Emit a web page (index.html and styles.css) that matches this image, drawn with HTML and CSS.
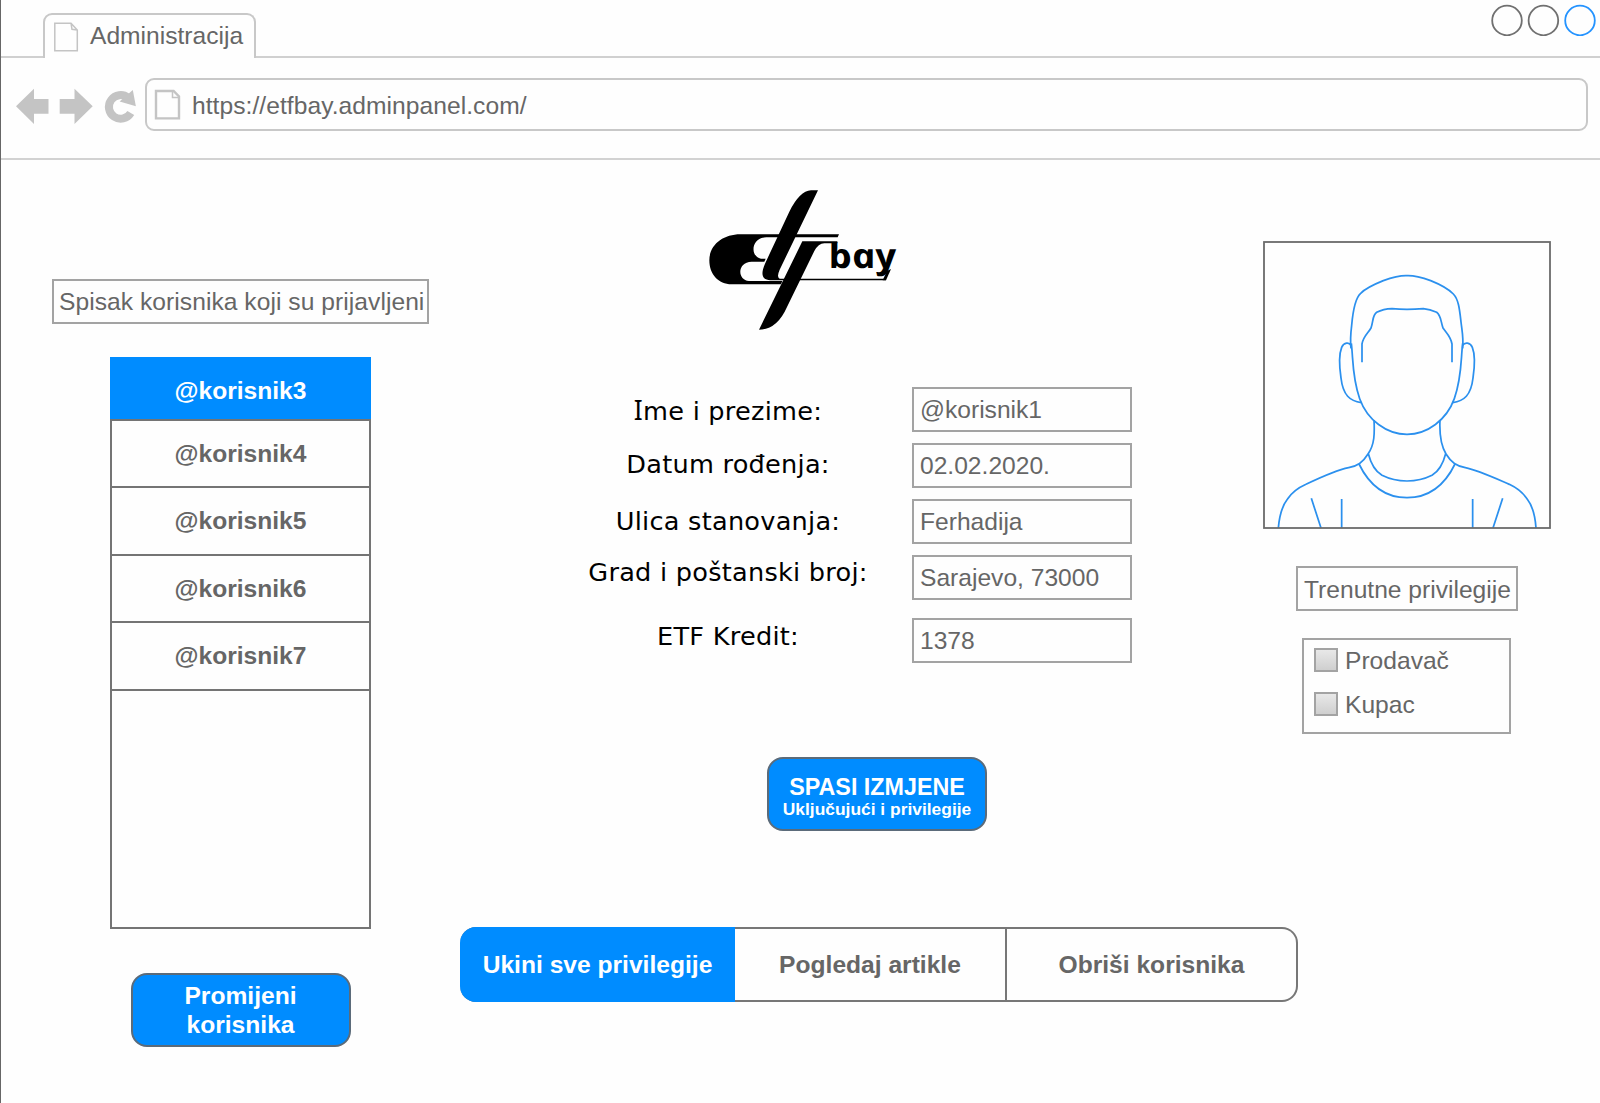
FILE: index.html
```html
<!DOCTYPE html>
<html lang="bs">
<head>
<meta charset="utf-8">
<title>Administracija</title>
<link rel="stylesheet" href="styles.css">
</head>
<body>
<div class="window">
  <header class="chrome">
    <div class="tabs">
      <div class="tab">
        <svg class="tab-icon" width="26" height="30" viewBox="0 0 26 30" fill="none" stroke="#c4c4c4" stroke-width="1.5"><path d="M1.8 1.2H18L24.3 8V28.8H1.8ZM18 1.2L19 7.3L24.3 8"/></svg>
        <span>Administracija</span>
      </div>
      <div class="tab-line"></div>
      <svg class="controls" width="106" height="32" viewBox="0 0 106 32" fill="none" stroke-width="1.8"><circle cx="16" cy="16.5" r="14.8" stroke="#707070"/><circle cx="52.4" cy="16.5" r="14.8" stroke="#707070"/><circle cx="89" cy="16.5" r="14.8" stroke="#2493ff"/></svg>
    </div>
    <div class="toolbar">
      <svg class="nav" width="122" height="38" viewBox="15 88 122 38" fill="#c4c4c4"><path d="M16 106.2L34 88.7V99H48.5V113.7H34V124Z"/><path d="M92.7 106.2L74.5 88.7V99H59.7V113.7H74.5V124Z"/><path d="M130.8 113A11.8 11.8 0 1 1 128 97.6" fill="none" stroke="#c4c4c4" stroke-width="8"/><path d="M132.8 90L135.9 106.2L119.6 101.6Z"/></svg>
      <div class="address">
        <svg width="28" height="32" viewBox="0 0 28 32" fill="none" stroke="#c4c4c4" stroke-width="2.4"><path d="M2 2H19.6L25 7.5V29.4H2Z"/><path d="M18.5 3V8.5H24.5" stroke-width="1.5"/></svg>
        <span>https://etfbay.adminpanel.com/</span>
      </div>
    </div>
  </header>
  <main class="page">
    <aside class="users">
      <div class="box heading">Spisak korisnika koji su prijavljeni</div>
      <ul class="user-list">
        <li class="selected">@korisnik3</li>
        <li>@korisnik4</li>
        <li>@korisnik5</li>
        <li>@korisnik6</li>
        <li>@korisnik7</li>
      </ul>
      <button class="button change">Promijeni<br>korisnika</button>
    </aside>
    <div class="content">
      <div class="detail">
        <section class="profile">
          <svg class="logo" width="220" height="142" viewBox="56 43 660 426">
            <path d="M446 176H150C98 176 57 208 57 254C57 296 84 326 124 326H272L276 316H176C140 314 140 258 184 258H222L226 249H212C178 242 182 186 228 185H442Z"/>
            <path d="M383 44L268 282Q258 305 268 309H584L587 314H240C212 312 212 292 224 264L297 108Q328 46 362 44Z"/>
            <path d="M206 462L336 197H441V203H402Q384 204 372 226L290 394Q260 462 206 462Z"/>
            <path d="M577 314L590 286L602 280L587 314Z"/>
            <text class="logo-text" transform="translate(421 277) scale(1.16 1) skewX(12)">bay</text>
          </svg>
          <form class="fields">
            <div class="field"><label class="l1"><span class="serif-i">I</span>me i prezime:</label><div class="box value">@korisnik1</div></div>
            <div class="field"><label class="l2">Datum rođenja:</label><div class="box value">02.02.2020.</div></div>
            <div class="field"><label class="l3">Ulica stanovanja:</label><div class="box value">Ferhadija</div></div>
            <div class="field"><label class="l4">Grad i poštanski broj:</label><div class="box value">Sarajevo, 73000</div></div>
            <div class="field last"><label class="l5">ETF Kredit:</label><div class="box value">1378</div></div>
          </form>
          <button class="button save"><span class="save-title">SPASI IZMJENE</span><span class="save-note">Uključujući i privilegije</span></button>
        </section>
        <aside class="account">
          <svg class="avatar" width="288" height="288" viewBox="39 33 864 864" fill="none" stroke="#2b90ee" stroke-width="5.2">
            <path d="M303 355C300 330 302 310 305 286C309 240 316 204 332 190C346 176 370 164 400 152Q444 136 471 137Q498 136 542 152C572 164 596 178 610 192C626 208 629 240 633 276C637 310 641 325 638 355"/>
            <path d="M336 397V342C340 318 354 310 363 294C370 274 367 256 380 247Q400 237 426 236Q448 238 471 238Q494 238 520 236Q540 238 560 247C573 256 572 274 579 294C588 308 602 318 606 342V397"/>
            <path d="M304 340C310 390 306 440 329 506C352 570 410 613 471 613C532 613 590 570 613 506C636 440 632 390 638 340"/>
            <path d="M303 346C298 336 282 336 275 352C267 372 268 410 273 444C279 496 300 513 334 518M638 346C644 336 660 336 667 352C675 372 674 410 669 444C663 496 642 513 608 518"/>
            <path d="M372 570C374 610 374 644 354 672C338 698 322 708 296 713C260 720 212 742 168 763Q130 780 112 808Q90 836 85 894M570 570C568 610 571 644 588 672C604 698 620 708 646 713C682 720 734 744 778 763Q814 780 832 808Q854 836 858 894"/>
            <path d="M355 671Q367 718 396 736Q430 753 471 753Q512 753 546 736Q575 718 587 671M327 702C360 770 410 803 471 803C532 803 582 770 615 702M184 805L213 894M275 807V894M668 807V894M758 805L729 894"/>
            <rect x="42" y="36" width="858" height="858" stroke="#6b6b6b" stroke-width="5.4"/>
          </svg>
          <div class="box rights-title">Trenutne privilegije</div>
          <div class="rights">
            <div class="right"><span class="check"></span>Prodavač</div>
            <div class="right"><span class="check"></span>Kupac</div>
          </div>
        </aside>
      </div>
      <nav class="actions">
        <button class="active">Ukini sve privilegije</button>
        <button class="articles">Pogledaj artikle</button>
        <button class="remove">Obriši korisnika</button>
      </nav>
    </div>
  </main>
</div>
</body>
</html>
```
FILE: styles.css
```css
* { box-sizing: border-box; }
body {
  margin: 0;
  background: #fefefe;
  color: #666;
  font-family: "Liberation Sans", Arial, sans-serif;
  font-size: 24.6px;
  line-height: 29px;
}
button { margin: 0; padding: 0; font: inherit; font-weight: bold; }
svg { display: block; flex: none; }
.window { width: 1600px; height: 1103px; overflow: hidden; border-left: 1px solid #666; }

.chrome { height: 160px; border-bottom: 2px solid #d2d2d2; }
.tabs { display: flex; height: 58px; position: relative; }
.tabs::before { content: ""; width: 42px; border-bottom: 2px solid #d0d0d0; }
.tab {
  display: flex;
  width: 213px;
  margin-top: 13px;
  padding: 6px 0 0 8px;
  gap: 12px;
  border: 2px solid #c8c8c8;
  border-bottom: 0;
  border-radius: 9px 9px 0 0;
}
.tab-line { flex: 1; border-bottom: 2px solid #d0d0d0; }
.tab-icon { margin-top: 1px; }
.tab span { margin-left: -1px; }
.controls { position: absolute; right: 3px; top: 4px; }
.toolbar { display: flex; padding: 20px 12px 0 14px; }
.nav { margin-top: 10px; }
.address {
  display: flex;
  flex: 1;
  height: 53px;
  margin-left: 8px;
  padding: 9px 0 0 7px;
  gap: 10px;
  border: 2px solid #c8c8c8;
  border-radius: 9px;
}
.address span { padding-top: 2px; letter-spacing: 0.05px; }

.page { display: flex; padding: 30px 0 0 51px; }
.users { display: flex; flex-direction: column; align-items: center; width: 377px; padding-top: 89px; }
.box { height: 45px; border: 2px solid #a3a3a3; padding: 7px 0 0 6px; white-space: nowrap; }
.heading { width: 377px; padding: 6px 0 0 5px; letter-spacing: 0.05px; }
.user-list {
  width: 261px;
  height: 572px;
  margin: 33px 0 44px;
  padding: 0;
  list-style: none;
  border: 2px solid #747474;
  border-top: 0;
  text-align: center;
  font-weight: bold;
}
.user-list li { height: 67.5px; padding-top: 18px; border-bottom: 2px solid #747474; }
.user-list .selected { height: 63.5px; margin: 0 -2px; padding-top: 19px; background: #008cff; color: #fff; }
.button { border: 2px solid #5b6b7a; border-radius: 16px; background: #008cff; color: #fff; }
.change { width: 220px; height: 74px; }

.content { margin-left: 31px; width: 1092px; }
.detail { display: flex; height: 737px; }
.profile { width: 803px; }
.logo { margin-left: 248.5px; }
.logo-text { font: italic 700 103px "Open Sans", "Noto Sans", sans-serif; }
.fields { display: flex; flex-direction: column; gap: 11px; margin-top: 55px; }
.field { display: flex; padding-left: 118px; }
.field.last { margin-top: 7px; }
.field label {
  width: 300px;
  margin-right: 34px;
  text-align: center;
  color: #000;
  font: 25.6px/30px "DejaVu Sans", Verdana, sans-serif;
  letter-spacing: 0.25px;
}
.serif-i { font-family: "Noto Sans", sans-serif; font-size: 26.5px; line-height: 1; }
.l1 { padding-top: 9px; }
.l2 { padding-top: 6px; }
.l3 { padding-top: 7px; }
.l4 { padding-top: 2px; }
.l5 { padding-top: 3px; }
.value { width: 220px; padding-top: 6px; }
.save { display: flex; flex-direction: column; align-items: center; width: 220px; height: 74px; margin: 94px 0 0 307px; padding-top: 16px; }
.save-title { font-size: 23.3px; line-height: 25px; }
.save-note { font-size: 17.4px; line-height: 19px; }

.account { display: flex; flex-direction: column; align-items: center; width: 288px; padding-top: 51px; }
.rights-title { width: 222px; margin-top: 37px; }
.rights { display: flex; flex-direction: column; gap: 15px; width: 209px; height: 96px; margin: 27px 1px 0 0; padding: 6px 0 0 10px; border: 2px solid #a3a3a3; }
.right { display: flex; gap: 7px; }
.check { width: 24px; height: 24px; margin-top: 2px; border: 2px solid #a3a3a3; background: linear-gradient(#e8e8e8, #cfcfcf); }

.actions { display: flex; width: 838px; height: 75px; border: 2px solid #777; border-left: 0; border-radius: 16px; }
.actions button { border: 0; background: none; color: #666; }
.actions .active { width: 275px; margin: -2px 0; border-radius: 16px 0 0 16px; background: #008cff; color: #fff; }
.actions .articles { width: 272px; border-right: 2px solid #777; }
.actions .remove { flex: 1; }
```
